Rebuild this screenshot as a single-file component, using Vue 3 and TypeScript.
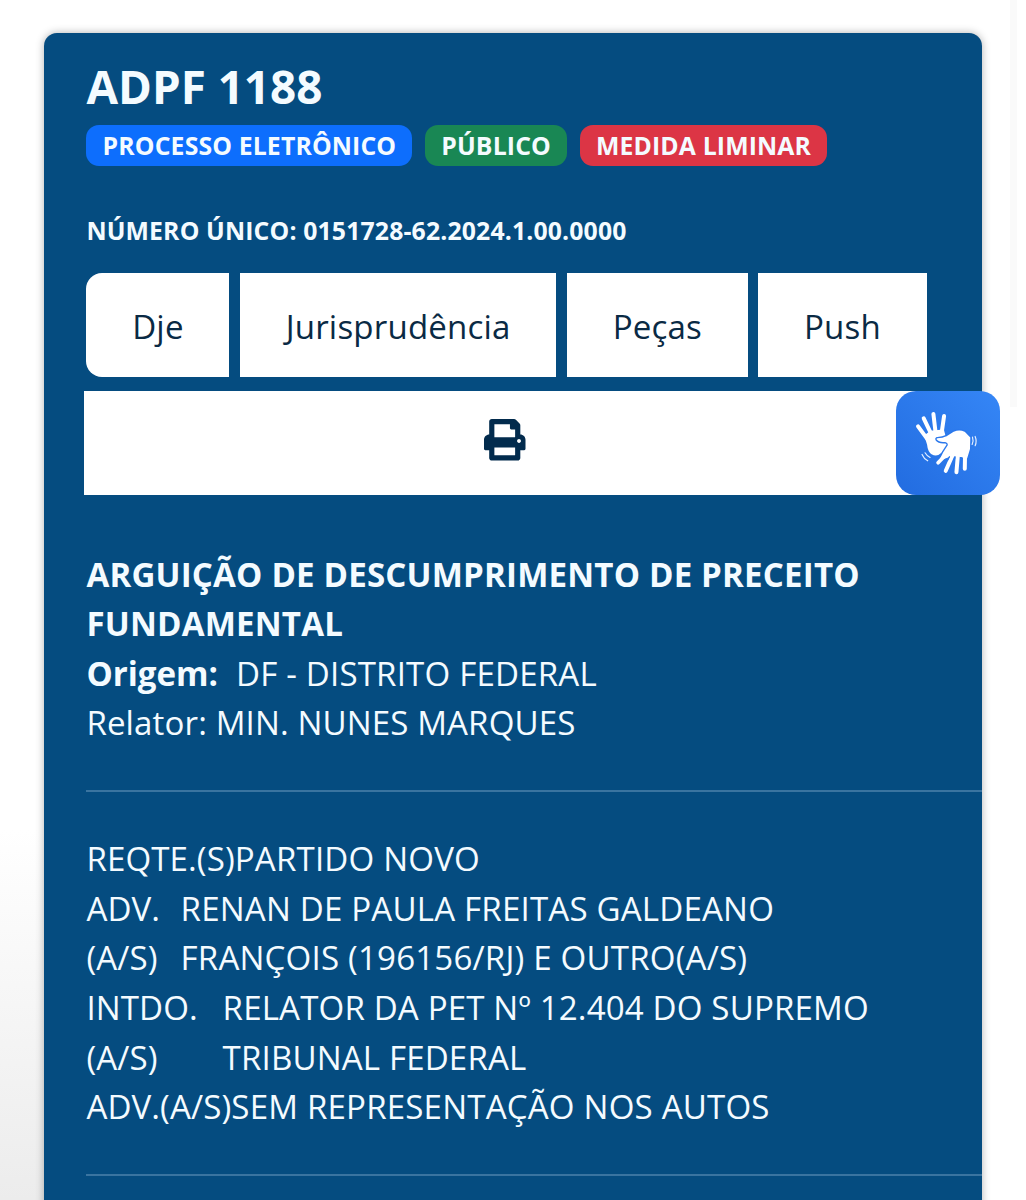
<script setup lang="ts">
interface Badge { label: string; tone: string }
interface Party { role: string[]; name: string[]; kind: string }

const badges: Badge[] = [
  { label: 'PROCESSO ELETRÔNICO', tone: 'primary' },
  { label: 'PÚBLICO', tone: 'success' },
  { label: 'MEDIDA LIMINAR', tone: 'danger' },
]
const actions: string[] = ['Dje', 'Jurisprudência', 'Peças', 'Push']
const parties: Party[] = [
  { role: ['REQTE.(S)'], name: ['PARTIDO NOVO'], kind: 'claimant' },
  { role: ['ADV.', '(A/S)'], name: ['RENAN DE PAULA FREITAS GALDEANO', 'FRANÇOIS (196156/RJ) E OUTRO(A/S)'], kind: 'lawyer' },
  { role: ['INTDO.', '(A/S)'], name: ['RELATOR DA PET Nº 12.404 DO SUPREMO', 'TRIBUNAL FEDERAL'], kind: 'respondent' },
  { role: ['ADV.(A/S)'], name: ['SEM REPRESENTAÇÃO NOS AUTOS'], kind: 'counsel' },
]
const frontHand = 'M202 206Q218 206 232 199L252 186Q268 179 282 186L298 202 297 236 289 262 276 258 262 256 246 254 212 266 222 246 236 224Q236 214 226 212 208 214 202 206Z'
</script>

<template>
  <main class="page">
    <div class="scroll"></div>
    <section class="card">
      <h1>ADPF 1188</h1>
      <div class="badges">
        <span v-for="b in badges" :key="b.label" class="badge" :class="b.tone">{{ b.label }}</span>
      </div>
      <p class="unique">NÚMERO ÚNICO: 0151728-62.2024.1.00.0000</p>
      <div class="actions">
        <button v-for="a in actions" :key="a" type="button">{{ a }}</button>
      </div>
      <div class="print-row">
        <button type="button" class="print" aria-label="Imprimir">
          <svg viewBox="0 0 512 512"><path fill="currentColor" d="M448 192V77.25c0-8.49-3.37-16.62-9.37-22.63L393.37 9.37c-6-6-14.14-9.37-22.63-9.37H96C78.33 0 64 14.33 64 32v160c-35.35 0-64 28.65-64 64v112c0 8.84 7.16 16 16 16h48v96c0 17.67 14.33 32 32 32h320c17.67 0 32-14.33 32-32v-96h48c8.84 0 16-7.16 16-16V256c0-35.35-28.65-64-64-64zm-64 256H128v-96h256v96zm0-224H128V64h192v48c0 8.84 7.16 16 16 16h48v96zm48 72c-13.25 0-24-10.75-24-24 0-13.26 10.75-24 24-24s24 10.74 24 24c0 13.25-10.75 24-24 24z" /></svg>
        </button>
        <div class="libras">
          <svg viewBox="78 62 312 312" fill="none" stroke-linecap="round" stroke-linejoin="round">
            <g stroke="#fff" stroke-width="12">
              <path d="M144 168 172 206M161 144 184 192M190 131 197 190M222 137 214 192" />
              <path fill="#fff" stroke-width="6" d="M166 196 182 184 219 180 224 200 232 222 212 245Q200 257 186 249Q176 242 174 222Z" />
            </g>
            <path stroke="#2b78ec" stroke-width="13" :d="frontHand" />
            <g stroke="#fff">
              <path fill="#fff" stroke-width="5" :d="frontHand" />
              <path stroke-width="11" d="M240 240 204 277" />
              <path stroke-width="12" d="M252 244 227 301M264 246 259 305M285 240 284 295" />
            </g>
            <path stroke="#2b78ec" stroke-width="4" d="M238 259 232 270M254 262 250 274M273 262 272 280" />
            <path stroke="#e4efff" stroke-width="3.5" d="M307 200Q311 211 306 222M315 198Q321 212 315 226M165 247Q170 256 180 261M156 252Q161 264 173 271" />
          </svg>
        </div>
      </div>
      <div class="info">
        <div class="strong">ARGUIÇÃO DE DESCUMPRIMENTO DE PRECEITO<br />FUNDAMENTAL</div>
        <div class="origin"><b>Origem:</b><span>DF - DISTRITO FEDERAL</span></div>
        <div class="rapporteur">Relator: MIN. NUNES MARQUES</div>
      </div>
      <hr />
      <div class="parties">
        <div v-for="p in parties" :key="p.kind" class="party" :class="p.kind">
          <div class="role"><div v-for="r in p.role" :key="r">{{ r }}</div></div>
          <div><div v-for="n in p.name" :key="n">{{ n }}</div></div>
        </div>
      </div>
      <hr />
    </section>
  </main>
</template>

<style>
body { background: #fff; }
</style>

<style scoped>
* { box-sizing: border-box; }
.page {
  height: 1200px;
  overflow: hidden;
  position: relative;
  padding: 33px 44.5px 0 44px;
  background: linear-gradient(#fff 0, #fff 830px, #ececec 1200px) left / 44px 100% no-repeat, #fff;
  font-family: "Open Sans", "Noto Sans", sans-serif;
  font-size: 33.1px;
  line-height: 49.6px;
  letter-spacing: .18px;
}
.scroll { position: absolute; left: 1010px; top: 0; width: 7px; height: 407px; background: #fafafa; }
.card {
  position: relative;
  width: 937.5px;
  height: 1190px;
  padding: 28px 0 0 42.4px;
  border-radius: 13px 13px 0 0;
  background: #054c80;
  color: #f4fbff;
  box-shadow: 0 0 8px rgba(0, 0, 0, .3);
}
h1 { margin: 0; font-size: 45.8px; line-height: 50px; font-weight: 700; letter-spacing: 0; }
.badges { display: flex; gap: 12.6px; margin-top: 13.5px; }
.badge { height: 41px; padding: 0 16.2px; border-radius: 13px; font-size: 24.8px; line-height: 40px; font-weight: 700; letter-spacing: .14px; }
.primary { background: #0d6efd; }
.success { background: #198754; }
.danger { background: #dc3545; }
.unique { margin: 46.2px 0 0; font-size: 24.8px; line-height: 36px; font-weight: 700; letter-spacing: .14px; }
.actions { display: flex; gap: 10.4px; margin-top: 25.5px; }
button { flex: none; height: 104.2px; padding: 3px 45.8px 0; border: 0; background: #fff; color: #0a2a44; font: inherit; letter-spacing: .18px; }
.actions button:first-child { border-radius: 16px 0 0 16px; }
.print-row { display: flex; margin: 13.6px 0 0 -2.8px; }
.print { display: flex; align-items: center; justify-content: center; width: 843px; padding: 0; color: #022b4d; }
.print svg { width: 41.5px; height: 41.5px; margin-top: -6px; }
.libras { position: relative; flex: none; width: 104.2px; height: 104.2px; margin-left: -31px; border-radius: 20px; background: linear-gradient(45deg, #226ce0, #3586f6); }
.libras svg { display: block; width: 100%; height: 100%; }
.info { margin-top: 54.5px; }
.strong, b { font-weight: 700; }
.origin { display: flex; gap: 18px; }
b { letter-spacing: 0; }
.rapporteur { letter-spacing: .12px; }
hr { height: 2.4px; margin: 42px 0 41.8px; border: 0; background: #3a74a0; }
.party { display: flex; }
.role { flex: none; letter-spacing: .1px; }
.lawyer .role { width: 94.2px; }
.respondent .role { width: 136.2px; }
.respondent { letter-spacing: .15px; }
</style>
